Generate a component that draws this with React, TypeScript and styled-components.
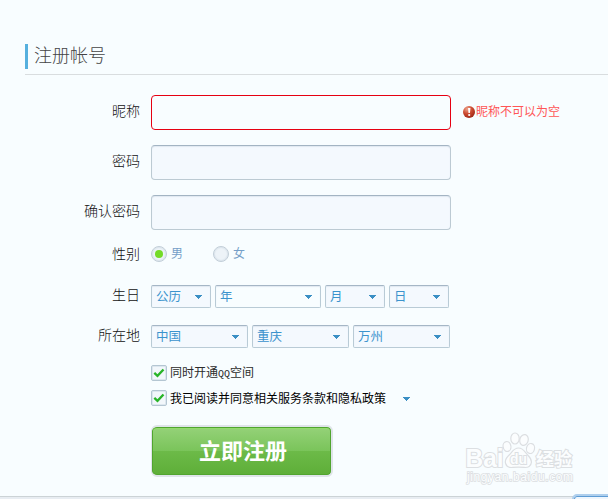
import { useState } from "react";
import styled, { createGlobalStyle } from "styled-components";

const GlobalStyle = createGlobalStyle`
  * {
    box-sizing: border-box;
  }

  body {
    margin: 0;
    background: #f8fdff;
    font-family: "Liberation Sans", "Noto Sans CJK SC", sans-serif;
    overflow: hidden;
  }
`;

// Styled Components
const Page = styled.div`
  position: relative;
  display: flex;
  flex-direction: column;
  height: 499px;
  padding-top: 44px;
  overflow: hidden;
`;

const Header = styled.header`
  height: 31px;
  margin-left: 25px;
  border-bottom: 1px solid #d9dddf;
`;

const Title = styled.h1`
  margin: 0;
  height: 25px;
  padding-left: 6px;
  border-left: 3px solid #56b0de;
  font-size: 18px;
  font-weight: 300;
  line-height: 25px;
  color: #444;
`;

const Form = styled.form`
  display: flex;
  flex-direction: column;
  padding-top: 20px;
`;

const Row = styled.div<{ $height: number; $gap: number }>`
  display: flex;
  align-items: center;
  height: ${(p) => p.$height}px;
  margin-bottom: ${(p) => p.$gap}px;
`;

const Label = styled.label<{ $shift?: number }>`
  width: 140px;
  margin-right: 11px;
  padding-bottom: ${(p) => p.$shift ?? 4}px;
  font-size: 14px;
  font-weight: 300;
  line-height: 20px;
  text-align: right;
  color: #111;
`;

const Input = styled.input<{ $error?: boolean }>`
  width: 300px;
  height: 35px;
  padding: 0 8px;
  border: 1px solid ${(p) => (p.$error ? "#e60012" : "#bccad3")};
  border-top-color: ${(p) => (p.$error ? "#e60012" : "#a3b4c3")};
  border-radius: 4px;
  background: ${(p) => (p.$error ? "#f8fdff" : "#f4f9fe")};
  box-shadow: ${(p) => (p.$error ? "none" : "inset 0 1px 1px #e0e8f1")};
  outline: none;
`;

const ErrorTip = styled.span`
  display: flex;
  align-items: center;
  height: 14px;
  margin: 0 0 1px 12px;
  font-size: 12px;
  line-height: 14px;
  color: #ff5656;
`;

const Radio = styled.span`
  display: flex;
  align-items: center;
  width: 62px;
  font-size: 12px;
  line-height: 16px;
  color: #769fc8;
`;

const RadioDot = styled.span<{ $checked: boolean }>`
  display: flex;
  align-items: center;
  justify-content: center;
  width: 16px;
  height: 16px;
  margin-right: 4px;
  border: 1px solid #c2ced8;
  border-radius: 50%;
  background: #edf3f8;
  box-shadow: inset 0 0 1px 1px #dce5ed;

  &::after {
    content: "";
    width: 8px;
    height: 8px;
    border-radius: 50%;
    background: ${(p) => (p.$checked ? "#74db28" : "transparent")};
  }
`;

const Select = styled.div<{ $width: number; $light?: boolean }>`
  display: flex;
  align-items: center;
  justify-content: space-between;
  width: ${(p) => p.$width}px;
  height: 23px;
  margin-right: 4px;
  padding: 0 7px 0 4px;
  border: 1px solid #b9cbd6;
  border-top-color: #a5b6c6;
  border-radius: 2px;
  background: ${(p) => (p.$light ? "#f8fdff" : "#f4f9fe")};
  box-shadow: inset 0 1px 1px #e0e8f1;
  font-size: 12.5px;
  line-height: 20px;
  color: #3b93cd;
`;

const Options = styled.div`
  display: flex;
  flex-direction: column;
  gap: 9px;
  padding-left: 151px;
`;

const CheckRow = styled.div<{ $dark?: boolean }>`
  display: flex;
  align-items: center;
  height: 16px;
  font-size: 12px;
  line-height: 16px;
  color: ${(p) => (p.$dark ? "#000" : "#2c2c2c")};
`;

const CheckText = styled.span`
  padding-top: 2px;
`;

const Latin = styled.span`
  font-family: "Liberation Mono", monospace;
  font-size: 10px;
`;

const CheckBox = styled.span`
  display: flex;
  align-items: center;
  justify-content: center;
  width: 16px;
  height: 16px;
  margin-right: 3px;
  border: 1px solid #b4c6d2;
  border-radius: 2px;
  background: #f2f7fb;
  box-shadow: inset 0 0 0 1px #dde7ef;
`;

const PolicyArrow = styled.span`
  display: flex;
  margin: 1px 0 0 17px;
`;

const Submit = styled.button`
  width: 182px;
  height: 52px;
  margin: 19px 0 0 151px;
  padding: 2px 0 0 3px;
  border: 2px solid #dfe4e9;
  border-left-width: 1px;
  border-radius: 6px;
  background: linear-gradient(#95d279, #7ac45a 50%, #6cba48 51%, #5eae38) padding-box;
  box-shadow: inset 0 0 0 1px #51a52f, inset 0 2px 0 #93dc6c;
  font-family: inherit;
  font-size: 22px;
  font-weight: 700;
  line-height: 30px;
  color: #fff;
`;

const Footer = styled.footer`
  height: 3px;
  margin-top: auto;
  border-top: 1px solid #ccd3d6;
  background: #e8edf2;
`;

const Corner = styled.div`
  position: absolute;
  right: -10px;
  bottom: -10px;
  width: 46px;
  height: 15px;
  border: 2px solid #aecfed;
  border-radius: 5px;
  background: #eef6fd;
  box-shadow: inset 0 0 0 1px #5d9cd5;
`;

const Watermark = styled.svg`
  position: absolute;
  left: 460px;
  top: 428px;
  font-family: "Liberation Sans", "Noto Sans CJK SC", sans-serif;
`;

const Arrow = () => (
  <svg width="8" height="4" viewBox="0 0 8 4" shapeRendering="crispEdges">
    <path d="M0 0h7v1H6v1H5v1H4v1H3V3H2V2H1V1H0z" fill="#3b8fc4" />
  </svg>
);

const Tick = () => (
  <svg width="12" height="10" viewBox="0 0 12 10">
    <path d="M1.3 4.8l3.2 3.1L10.5 1.5" fill="none" stroke="#28b428" strokeWidth="2.3" />
  </svg>
);

const ErrorIcon = () => (
  <svg width="13" height="14" viewBox="0 0 13 14">
    <defs>
      <radialGradient id="ball" cx=".35" cy=".25" r=".8">
        <stop offset="0" stopColor="#eda58d" />
        <stop offset=".5" stopColor="#cc4a30" />
        <stop offset="1" stopColor="#9c2614" />
      </radialGradient>
    </defs>
    <circle cx="6" cy="7" r="6" fill="url(#ball)" />
    <path d="M5 3h2.4L6.9 8H5.5z" fill="#fff" />
    <circle cx="6.2" cy="10" r="1.1" fill="#fff" />
  </svg>
);

const BaiduMark = () => (
  <Watermark width="130" height="60" viewBox="0 0 130 60">
    <g fill="#fbfdfe" stroke="#dcdfe2" strokeWidth="1.2">
      <ellipse cx="47" cy="18.5" rx="3.9" ry="5" transform="rotate(-10 47 18.5)" />
      <ellipse cx="55" cy="10.5" rx="4.2" ry="5.5" />
      <ellipse cx="64" cy="12" rx="4.2" ry="5.5" transform="rotate(15 64 12)" />
      <ellipse cx="70.5" cy="20.500" rx="4" ry="5" transform="rotate(15 70.5 20.5)" />
      <path d="M58.500 20c-5 0-6.400 4.300-9.100 6.700-3 2.700-5 5-3.800 8.800 1 3.300 4 4.300 7.200 3.900 4-.5 7.400-.5 11.200 0 4.300.5 7-1.200 7.400-5 .4-3.500-2-5.400-4.300-8C64.900 24 63.300 20 58.500 20z" />
      <g fontWeight="700" paintOrder="stroke" strokeWidth="2">
        <text x="5.500" y="38.500" fontSize="25" textLength="38" lengthAdjust="spacingAndGlyphs">Bai</text>
        <text x="50" y="36" fontSize="15" textLength="17" lengthAdjust="spacingAndGlyphs">du</text>
        <text x="76" y="37.500" fontSize="18" textLength="36">经验</text>
      </g>
      <text x="7" y="53" fontSize="12" textLength="106" strokeWidth="1.600" paintOrder="stroke">jingyan.baidu.com</text>
    </g>
  </Watermark>
);

const birthday = [
  { text: "公历", width: 60 },
  { text: "年", width: 106, light: true },
  { text: "月", width: 60 },
  { text: "日", width: 60 },
];

const region = [
  { text: "中国", width: 97 },
  { text: "重庆", width: 97 },
  { text: "万州", width: 97 },
];

const App = () => {
  const [gender, setGender] = useState("男");

  return (
    <Page>
      <GlobalStyle />
      <Header>
        <Title>注册帐号</Title>
      </Header>
      <Form onSubmit={(e) => e.preventDefault()}>
        <Row $height={35} $gap={15}>
          <Label>昵称</Label>
          <Input $error />
          <ErrorTip>
            <ErrorIcon />
            昵称不可以为空
          </ErrorTip>
        </Row>
        <Row $height={35} $gap={15}>
          <Label>密码</Label>
          <Input type="password" />
        </Row>
        <Row $height={35} $gap={15}>
          <Label>确认密码</Label>
          <Input type="password" />
        </Row>
        <Row $height={17} $gap={23}>
          <Label $shift={0}>性别</Label>
          {["男", "女"].map((g) => (
            <Radio key={g} onClick={() => setGender(g)}>
              <RadioDot $checked={gender === g} />
              {g}
            </Radio>
          ))}
        </Row>
        <Row $height={23} $gap={17}>
          <Label $shift={4}>生日</Label>
          {birthday.map((s) => (
            <Select key={s.text} $width={s.width} $light={s.light}>
              {s.text}
              <Arrow />
            </Select>
          ))}
        </Row>
        <Row $height={23} $gap={17}>
          <Label $shift={4}>所在地</Label>
          {region.map((s) => (
            <Select key={s.text} $width={s.width}>
              {s.text}
              <Arrow />
            </Select>
          ))}
        </Row>
        <Options>
          <CheckRow>
            <CheckBox>
              <Tick />
            </CheckBox>
            <CheckText>
              同时开通<Latin>QQ</Latin>空间
            </CheckText>
          </CheckRow>
          <CheckRow $dark>
            <CheckBox>
              <Tick />
            </CheckBox>
            <CheckText>我已阅读并同意相关服务条款和隐私政策</CheckText>
            <PolicyArrow>
              <Arrow />
            </PolicyArrow>
          </CheckRow>
        </Options>
        <Submit>立即注册</Submit>
      </Form>
      <BaiduMark />
      <Footer />
      <Corner />
    </Page>
  );
};

export default App;
